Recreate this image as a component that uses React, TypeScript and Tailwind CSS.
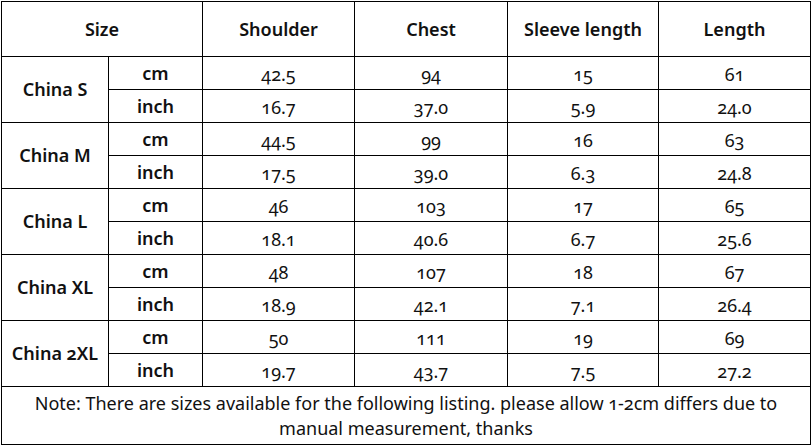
const rows = [
  { size: 'China S', cm: ['42.5', '94', '15', '61'], inch: ['16.7', '37.0', '5.9', '24.0'] },
  { size: 'China M', cm: ['44.5', '99', '16', '63'], inch: ['17.5', '39.0', '6.3', '24.8'] },
  { size: 'China L', cm: ['46', '103', '17', '65'], inch: ['18.1', '40.6', '6.7', '25.6'] },
  { size: 'China XL', cm: ['48', '107', '18', '67'], inch: ['18.9', '42.1', '7.1', '26.4'] },
  { size: 'China 2XL', cm: ['50', '111', '19', '69'], inch: ['19.7', '43.7', '7.5', '27.2'] },
];

const headers = ['Shoulder', 'Chest', 'Sleeve length', 'Length'];

const cell = 'border border-black text-center align-middle p-0';

export default function App() {
  return (
    <div className="w-[812px] h-[447px] bg-white pl-[1px] pt-[1px] font-['Noto_Sans',sans-serif] text-[#111]">
      <table className="table-fixed border-collapse w-[809px] oldstyle-nums">
        <colgroup>
          <col className="w-[107px]" />
          <col className="w-[94px]" />
          <col className="w-[152px]" />
          <col className="w-[153px]" />
          <col className="w-[151px]" />
          <col className="w-[152px]" />
        </colgroup>
        <thead>
          <tr className="h-[55px]">
            <th colSpan={2} className={`${cell} text-[18px] font-semibold`}>Size</th>
            {headers.map((h) => (
              <th key={h} className={`${cell} text-[18px] font-semibold`}>
                {h}
              </th>
            ))}
          </tr>
        </thead>
        <tbody>
          {rows.map((r) => (
            <>
              <tr key={r.size + 'cm'} className="h-[33px]">
                <td rowSpan={2} className={`${cell} text-[18px] font-semibold`}>
                  {r.size}
                </td>
                <td className={`${cell} text-[18px] font-semibold`}>cm</td>
                {r.cm.map((v, i) => (
                  <td key={i} className={`${cell} text-[18px] pt-[3px]`}>
                    {v}
                  </td>
                ))}
              </tr>
              <tr key={r.size + 'inch'} className="h-[33px]">
                <td className={`${cell} text-[18px] font-semibold`}>inch</td>
                {r.inch.map((v, i) => (
                  <td key={i} className={`${cell} text-[18px] pt-[3px]`}>
                    {v}
                  </td>
                ))}
              </tr>
            </>
          ))}
          <tr className="h-[58px]">
            <td colSpan={6} className={`${cell} text-[18px] leading-[25px] px-6`}>
              Note: There are sizes available for the following listing. please allow 1-2cm differs due to
              manual measurement, thanks
            </td>
          </tr>
        </tbody>
      </table>
    </div>
  );
}
